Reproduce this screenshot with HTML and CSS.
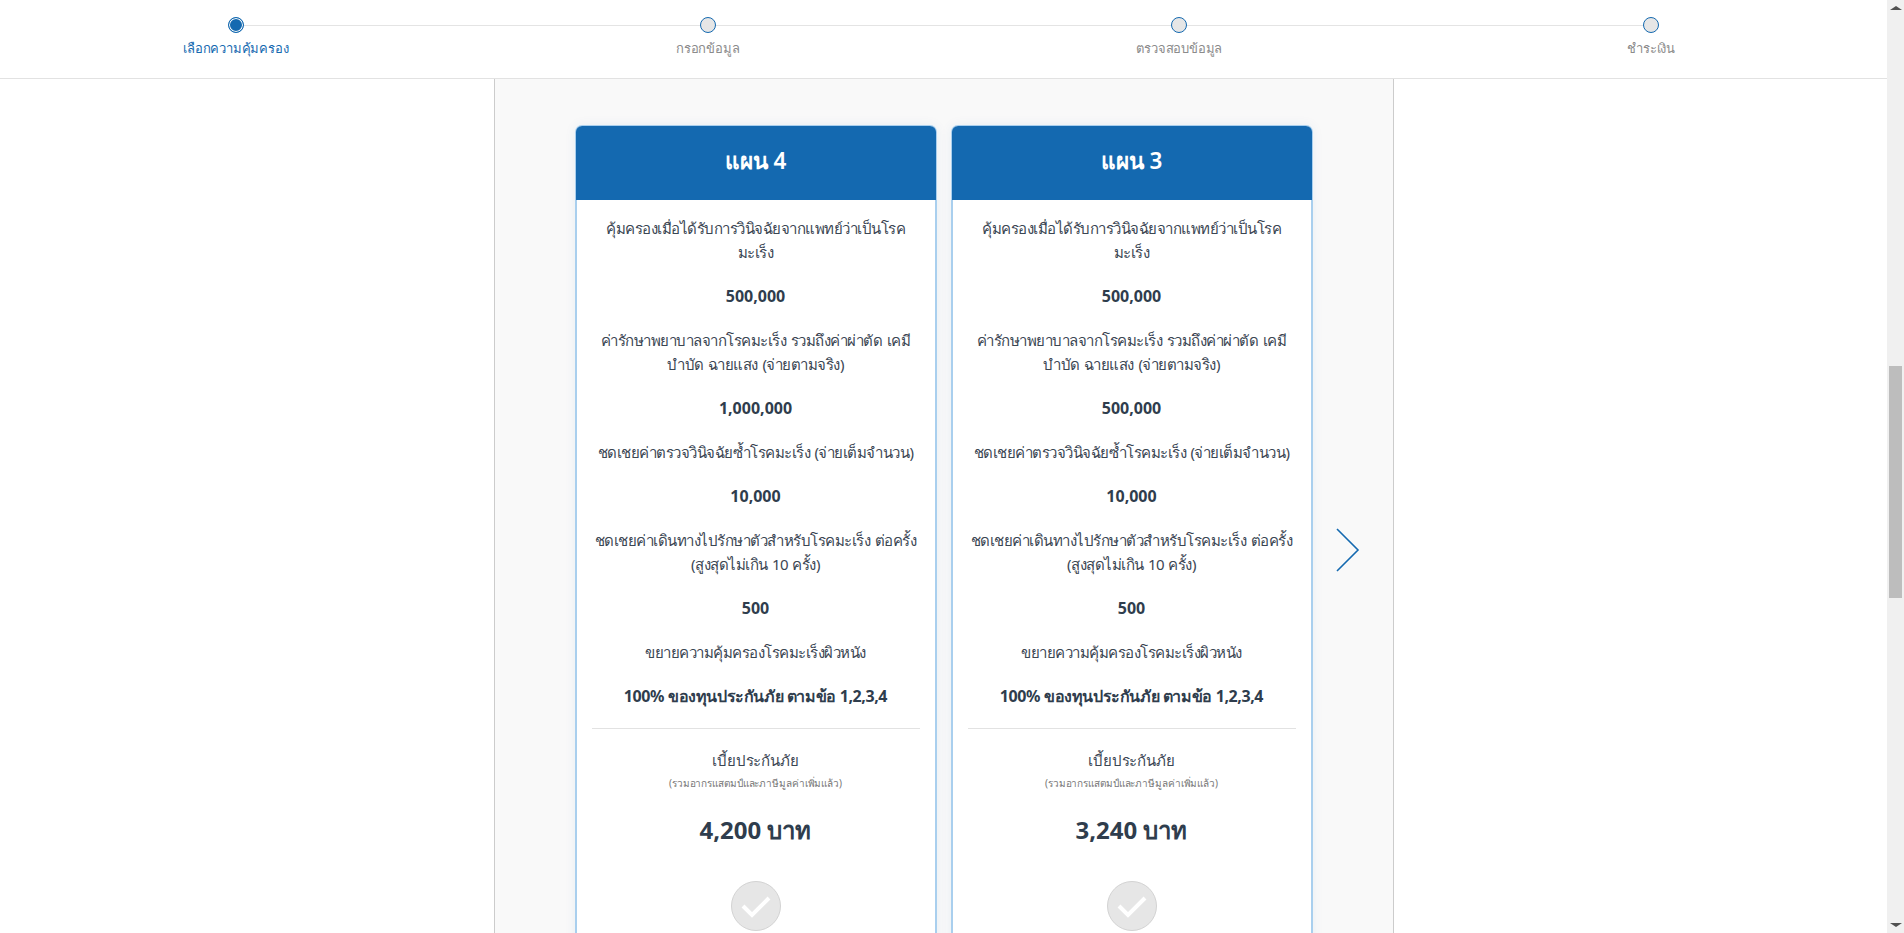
FILE: index.html
```html
<!DOCTYPE html>
<html lang="th">
<head>
  <meta charset="UTF-8" />
  <meta name="viewport" content="width=device-width, initial-scale=1.0"/>
  <title>เลือกความคุ้มครอง</title>
  <link rel="stylesheet" href="styles.css">
</head>
<body>
  <div class="page">
    <header class="steps">
      <div class="step active"><span class="dot"></span><span class="step-name">เลือกความคุ้มครอง</span></div>
      <div class="step"><span class="dot"></span><span class="step-name">กรอกข้อมูล</span></div>
      <div class="step"><span class="dot"></span><span class="step-name">ตรวจสอบข้อมูล</span></div>
      <div class="step"><span class="dot"></span><span class="step-name">ชำระเงิน</span></div>
    </header>

    <main class="panel">
      <section class="plan">
        <h2 class="plan-title">แผน 4</h2>
        <div class="plan-body">
          <p>คุ้มครองเมื่อได้รับการวินิจฉัยจากแพทย์ว่าเป็นโรคมะเร็ง</p>
          <p class="amount">500,000</p>
          <p>ค่ารักษาพยาบาลจากโรคมะเร็ง รวมถึงค่าผ่าตัด เคมีบำบัด ฉายแสง (จ่ายตามจริง)</p>
          <p class="amount">1,000,000</p>
          <p>ชดเชยค่าตรวจวินิจฉัยซ้ำโรคมะเร็ง (จ่ายเต็มจำนวน)</p>
          <p class="amount">10,000</p>
          <p>ชดเชยค่าเดินทางไปรักษาตัวสำหรับโรคมะเร็ง ต่อครั้ง (สูงสุดไม่เกิน 10 ครั้ง)</p>
          <p class="amount">500</p>
          <p>ขยายความคุ้มครองโรคมะเร็งผิวหนัง</p>
          <p class="amount thai">100% ของทุนประกันภัย ตามข้อ 1,2,3,4</p>
          <div class="premium">
            <div class="premium-label">เบี้ยประกันภัย</div>
            <div class="premium-note">(รวมอากรแสตมป์และภาษีมูลค่าเพิ่มแล้ว)</div>
            <div class="premium-price">4,200 บาท</div>
            <div class="pick">
              <svg viewBox="0 0 50 50" width="50" height="50"><path d="M12 25l9 9 17-17" fill="none" stroke="#fff" stroke-width="4"/></svg>
            </div>
          </div>
        </div>
      </section>

      <section class="plan">
        <h2 class="plan-title">แผน 3</h2>
        <div class="plan-body">
          <p>คุ้มครองเมื่อได้รับการวินิจฉัยจากแพทย์ว่าเป็นโรคมะเร็ง</p>
          <p class="amount">500,000</p>
          <p>ค่ารักษาพยาบาลจากโรคมะเร็ง รวมถึงค่าผ่าตัด เคมีบำบัด ฉายแสง (จ่ายตามจริง)</p>
          <p class="amount">500,000</p>
          <p>ชดเชยค่าตรวจวินิจฉัยซ้ำโรคมะเร็ง (จ่ายเต็มจำนวน)</p>
          <p class="amount">10,000</p>
          <p>ชดเชยค่าเดินทางไปรักษาตัวสำหรับโรคมะเร็ง ต่อครั้ง (สูงสุดไม่เกิน 10 ครั้ง)</p>
          <p class="amount">500</p>
          <p>ขยายความคุ้มครองโรคมะเร็งผิวหนัง</p>
          <p class="amount thai">100% ของทุนประกันภัย ตามข้อ 1,2,3,4</p>
          <div class="premium">
            <div class="premium-label">เบี้ยประกันภัย</div>
            <div class="premium-note">(รวมอากรแสตมป์และภาษีมูลค่าเพิ่มแล้ว)</div>
            <div class="premium-price">3,240 บาท</div>
            <div class="pick">
              <svg viewBox="0 0 50 50" width="50" height="50"><path d="M12 25l9 9 17-17" fill="none" stroke="#fff" stroke-width="4"/></svg>
            </div>
          </div>
        </div>
      </section>

      <div class="next">
        <svg viewBox="0 0 24 44" width="24" height="44"><path d="M1 1l21 21L1 43" fill="none" stroke="#1469b0" stroke-width="1.6"/></svg>
      </div>
    </main>
  </div>

  <div class="scrollbar">
    <span class="arrow-up"></span>
    <div class="track"><div class="thumb"></div></div>
    <span class="arrow-down"></span>
  </div>
</body>
</html>
```

FILE: styles.css
```css
* {
  box-sizing: border-box;
}

html,
body {
  height: 100%;
}

body {
  margin: 0;
  display: flex;
  overflow: hidden;
  background: #fff;
  color: #3b4653;
  font-family: "Noto Sans", "Open Sans", sans-serif;
  font-size: 16px;
  line-height: 24px;
}

.page {
  flex: 1;
  min-width: 0;
  height: 100%;
  overflow: hidden;
}

/* top progress bar */
.steps {
  display: grid;
  grid-template-columns: repeat(4, 1fr);
  height: 79px;
  border-bottom: 1px solid #e2e2e2;
  background: #fff;
  background-image: linear-gradient(#e4e4e4, #e4e4e4);
  background-size: 1414px 1px;
  background-position: 236px 25px;
  background-repeat: no-repeat;
}

.step {
  display: flex;
  flex-direction: column;
  align-items: center;
  padding-top: 17px;
  color: #8b8b8b;
  font-size: 13px;
  letter-spacing: -0.2px;
}

.step.active {
  color: #1469b0;
}

.dot {
  width: 16px;
  height: 16px;
  border: 1px solid #1469b0;
  border-radius: 50%;
  background: #e6e6e6;
}

.step.active .dot {
  background: #1469b0;
  box-shadow: inset 0 0 0 1px #fff;
}

.step-name {
  margin-top: 3px;
}

/* plans */
.panel {
  display: flex;
  align-items: flex-start;
  gap: 14px;
  width: 900px;
  height: 900px;
  margin: 0 auto;
  padding: 46px 0 0 80px;
  border-left: 1px solid #ccc;
  border-right: 1px solid #ccc;
  background: #f9f9f9;
}

.plan {
  flex: none;
  width: 362px;
  border: 2px solid #a9cfee;
  border-top-width: 1px;
  border-radius: 7px 7px 0 0;
  background: #fff;
  box-shadow: 0 0 12px rgba(20, 105, 176, 0.07);
}

.plan-title {
  height: 74px;
  margin: 0 -1px;
  border-radius: 6px 6px 0 0;
  background: #1469b0;
  color: #fff;
  font-size: 22.5px;
  font-weight: 600;
  line-height: 69px;
  text-align: center;
}

.plan-body {
  padding: 16px 15px 60px;
  text-align: center;
}

.plan-body p {
  margin: 0 0 20px;
  font-size: 15px;
  letter-spacing: -0.5px;
  word-spacing: 1px;
}

.plan-body .amount {
  color: #2f3d4d;
  font-size: 16px;
  font-weight: 700;
  letter-spacing: 0;
  word-spacing: 0;
}

.plan-body .thai {
  letter-spacing: -0.4px;
}

.premium {
  padding-top: 19px;
  border-top: 1px solid #e2e2e2;
}

.premium-label {
  font-size: 15px;
  letter-spacing: -0.2px;
}

.premium-note {
  margin-top: -1px;
  color: #777;
  font-size: 10px;
  letter-spacing: -0.1px;
}

.premium-price {
  margin-top: 17px;
  color: #2f3d4d;
  font-size: 24px;
  font-weight: 700;
  line-height: 35px;
}

.pick {
  width: 50px;
  height: 50px;
  margin: 34px auto 0;
  border: 1px solid #d3d3d3;
  border-radius: 50%;
  background: #e6e6e6;
}

.pick svg {
  display: block;
  margin: -1px;
}

.next {
  flex: none;
  margin: 403px 0 0 9px;
  line-height: 0;
}

/* window scrollbar */
.scrollbar {
  display: flex;
  flex: none;
  flex-direction: column;
  align-items: center;
  width: 17px;
  height: 100%;
  background: #f0f0f0;
}

.track {
  flex: 1;
  width: 100%;
  padding: 0 2px;
}

.thumb {
  width: 13px;
  height: 232px;
  margin-top: 350px;
  background: #bdbdbd;
}

.arrow-up,
.arrow-down {
  width: 0;
  height: 0;
  margin: 6px 0;
  border-left: 6px solid transparent;
  border-right: 6px solid transparent;
}

.arrow-up {
  border-bottom: 4px solid #505050;
}

.arrow-down {
  border-top: 4px solid #505050;
}
```
